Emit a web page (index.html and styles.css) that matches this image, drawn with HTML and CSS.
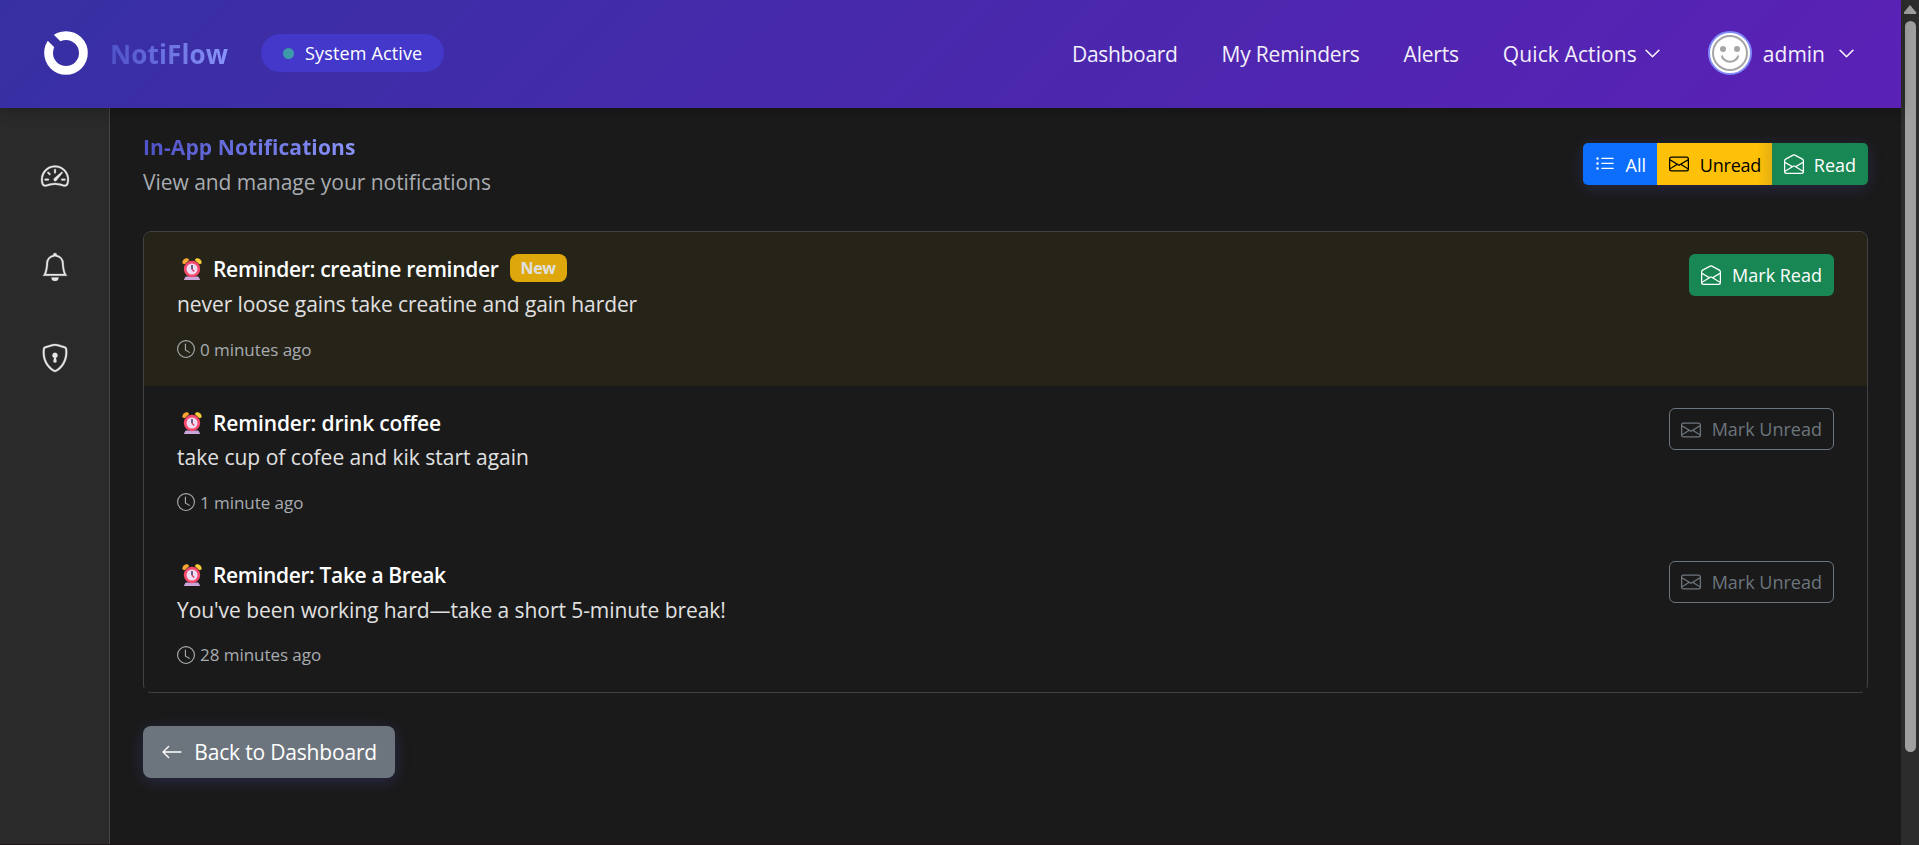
FILE: index.html
```html
<!DOCTYPE html>
<html lang="en">
<head>
<meta charset="utf-8">
<title>NotiFlow</title>
<link rel="stylesheet" href="styles.css">
</head>
<body>
<svg class="defs" width="0" height="0">
  <symbol id="envelope" viewBox="0 0 16 16"><path d="M0 4a2 2 0 0 1 2-2h12a2 2 0 0 1 2 2v8a2 2 0 0 1-2 2H2a2 2 0 0 1-2-2zm2-1a1 1 0 0 0-1 1v.217l7 4.2 7-4.2V4a1 1 0 0 0-1-1zm13 2.383-4.708 2.825L15 11.105zm-.034 6.876-5.64-3.471L8 9.583l-1.326-.795-5.64 3.47A1 1 0 0 0 2 13h12a1 1 0 0 0 .966-.741M1 11.105l4.708-2.897L1 5.383z"/></symbol>
  <symbol id="envelope-open" viewBox="0 0 16 16"><path d="M8.47 1.318a1 1 0 0 0-.94 0l-6 3.2A1 1 0 0 0 1 5.4v.817l5.75 3.45L8 8.917l1.25.75L15 6.217V5.4a1 1 0 0 0-.53-.882zM15 7.383l-4.778 2.867L15 13.117zm-.035 6.88L8 10.082l-6.965 4.18A1 1 0 0 0 2 15h12a1 1 0 0 0 .965-.738ZM1 13.116l4.778-2.867L1 7.383v5.734ZM7.059.435a2 2 0 0 1 1.882 0l6 3.2A2 2 0 0 1 16 5.4V14a2 2 0 0 1-2 2H2a2 2 0 0 1-2-2V5.4a2 2 0 0 1 1.059-1.765z"/></symbol>
  <symbol id="clock" viewBox="0 0 16 16"><path d="M8 3.5a.5.5 0 0 0-1 0V9a.5.5 0 0 0 .252.434l3.5 2a.5.5 0 0 0 .496-.868L8 8.71z"/><path d="M8 16A8 8 0 1 0 8 0a8 8 0 0 0 0 16m7-8A7 7 0 1 1 1 8a7 7 0 0 1 14 0"/></symbol>
  <symbol id="chevron" viewBox="0 0 16 16"><path fill-rule="evenodd" d="M1.646 4.646a.5.5 0 0 1 .708 0L8 10.293l5.646-5.647a.5.5 0 0 1 .708.708l-6 6a.5.5 0 0 1-.708 0l-6-6a.5.5 0 0 1 0-.708"/></symbol>
  <symbol id="alarm" viewBox="0 0 20 22">
    <path d="M.6 5.6C-.4 2.500 2.600-.3 5.600.3l1.700 1.600L2.500 6.300z" fill="#f9a833"/>
    <path d="M19.400 5.600C20.400 2.500 17.400-.3 14.400.3l-1.700 1.600 4.800 4.400z" fill="#fccd3a"/>
    <path d="M3.600 18.500h12.800l1.800 3.500H1.800z" fill="#c9a6dc"/>
    <circle cx="10" cy="11" r="8.200" fill="#f8486c"/>
    <circle cx="10" cy="11" r="5.500" fill="#eedcf2"/>
    <path d="M10 7v4.200" stroke="#45325c" stroke-width="1.500" fill="none"/>
    <path d="M10 11.200l2.200 2.200" stroke="#e0355c" stroke-width="1.400" fill="none"/>
  </symbol>
  <mask id="gap" maskUnits="userSpaceOnUse" x="0" y="0" width="44" height="44"><rect width="44" height="44" fill="#fff"/><path d="M22 22L0 0" stroke="#000" stroke-width="8.600"/></mask>
</svg>

<div class="window">
  <div class="page">
    <header class="topbar">
      <svg class="logo" viewBox="0 0 44 44"><circle class="logo-ring" cx="22" cy="22" r="17.400" mask="url(#gap)"/></svg>
      <span class="brand">NotiFlow</span>
      <span class="status"><i class="dot"></i><span>System Active</span></span>
      <nav class="nav">
        <a class="n1">Dashboard</a>
        <a class="n2">My Reminders</a>
        <a class="n3">Alerts</a>
        <a class="n4">Quick Actions</a>
        <svg class="chev"><use href="#chevron"/></svg>
      </nav>
      <div class="user">
        <svg class="avatar" viewBox="0 0 44 44"><circle cx="22" cy="22" r="21" fill="#fff" stroke="#818cf8" stroke-width="2"/><g fill="none" stroke="#a6a6a6" stroke-width="2"><circle cx="22" cy="22" r="17"/><path d="M13.700 24.500a8.400 7.300 0 0 0 16.600 0"/></g><circle cx="15" cy="18" r="3" fill="#a6a6a6"/><circle cx="29" cy="18" r="3" fill="#a6a6a6"/></svg>
        <span class="uname">admin</span>
        <svg class="chev"><use href="#chevron"/></svg>
      </div>
    </header>

    <div class="body">
      <aside class="side">
        <svg viewBox="0 0 16 16"><path d="M8 4a.5.5 0 0 1 .5.5V6a.5.5 0 0 1-1 0V4.500A.5.5 0 0 1 8 4M3.732 5.732a.5.5 0 0 1 .707 0l.915.914a.5.5 0 1 1-.708.708l-.914-.915a.5.5 0 0 1 0-.707M2 10a.5.5 0 0 1 .5-.5h1.586a.5.5 0 0 1 0 1H2.500A.5.5 0 0 1 2 10m9.500 0a.5.5 0 0 1 .5-.5h1.500a.5.5 0 0 1 0 1H12a.5.5 0 0 1-.5-.5m.754-4.246a.39.39 0 0 0-.527-.02L7.547 9.310a.91.91 0 1 0 1.302 1.258l3.434-4.297a.39.39 0 0 0-.029-.518z"/><path fill-rule="evenodd" d="M0 10a8 8 0 1 1 15.547 2.661c-.442 1.253-1.845 1.602-2.932 1.250C11.309 13.488 9.475 13 8 13c-1.474 0-3.310.488-4.615.911-1.087.352-2.490.003-2.932-1.250A8 8 0 0 1 0 10m8-7a7 7 0 0 0-6.603 9.329c.203.575.923.876 1.680.630C4.397 12.533 6.358 12 8 12s3.604.532 4.923.960c.757.245 1.477-.056 1.680-.631A7 7 0 0 0 8 3"/></svg>
        <svg viewBox="0 0 16 16"><path d="M8 16a2 2 0 0 0 2-2H6a2 2 0 0 0 2 2M8 1.918l-.797.161A4 4 0 0 0 4 6c0 .628-.134 2.197-.459 3.742-.16.767-.376 1.566-.663 2.258h10.244c-.287-.692-.502-1.490-.663-2.258C12.134 8.197 12 6.628 12 6a4 4 0 0 0-3.203-3.920zM14.220 12c.223.447.481.801.780 1H1c.299-.199.557-.553.780-1C2.680 10.200 3 6.880 3 6c0-2.420 1.720-4.440 4.005-4.901a1 1 0 1 1 1.990 0A5 5 0 0 1 13 6c0 .880.320 4.200 1.220 6"/></svg>
        <svg viewBox="0 0 16 16"><path d="M5.338 1.590a61 61 0 0 0-2.837.856.480.480 0 0 0-.328.390c-.554 4.157.726 7.190 2.253 9.188a10.700 10.700 0 0 0 2.287 2.233c.346.244.652.420.893.533q.180.085.293.118a1 1 0 0 0 .101.025 1 1 0 0 0 .1-.025q.114-.034.294-.118c.240-.113.547-.290.893-.533a10.700 10.700 0 0 0 2.287-2.233c1.527-1.997 2.807-5.031 2.253-9.188a.480.480 0 0 0-.328-.390c-.651-.213-1.750-.560-2.837-.855C9.552 1.290 8.531 1.067 8 1.067c-.530 0-1.552.223-2.662.524zM5.072.560C6.157.265 7.310 0 8 0s1.843.265 2.928.560c1.110.300 2.229.655 2.887.870a1.540 1.540 0 0 1 1.044 1.262c.596 4.477-.787 7.795-2.465 9.990a11.800 11.800 0 0 1-2.517 2.453 7 7 0 0 1-1.048.625c-.280.132-.581.240-.829.240s-.548-.108-.829-.240a7 7 0 0 1-1.048-.625 11.800 11.800 0 0 1-2.517-2.453C1.928 10.487.545 7.169 1.141 2.692A1.540 1.540 0 0 1 2.185 1.430 63 63 0 0 1 5.072.560"/><path d="M9.500 6.500a1.500 1.500 0 0 1-1 1.415l.385 1.990a.5.5 0 0 1-.491.595h-.788a.5.5 0 0 1-.490-.595l.384-1.990a1.500 1.500 0 1 1 2-1.415"/></svg>
      </aside>

      <main class="main">
        <section class="head">
          <div class="titles">
            <h1 class="title">In-App Notifications</h1>
            <p class="sub">View and manage your notifications</p>
          </div>
          <div class="filters">
            <a class="fbtn all"><svg viewBox="0 0 16 16"><path fill-rule="evenodd" d="M5 11.500a.5.5 0 0 1 .5-.5h9a.5.5 0 0 1 0 1h-9a.5.5 0 0 1-.5-.5m0-4a.5.5 0 0 1 .5-.5h9a.5.5 0 0 1 0 1h-9a.5.5 0 0 1-.5-.5m0-4a.5.5 0 0 1 .5-.5h9a.5.5 0 0 1 0 1h-9a.5.5 0 0 1-.5-.5m-3 1a1 1 0 1 0 0-2 1 1 0 0 0 0 2m0 4a1 1 0 1 0 0-2 1 1 0 0 0 0 2m0 4a1 1 0 1 0 0-2 1 1 0 0 0 0 2"/></svg><span>All</span></a>
            <a class="fbtn unread"><svg><use href="#envelope"/></svg><span>Unread</span></a>
            <a class="fbtn read"><svg><use href="#envelope-open"/></svg><span>Read</span></a>
          </div>
        </section>

        <section class="list">
          <article class="item fresh">
            <div class="info">
              <h2 class="name"><svg class="alarm"><use href="#alarm"/></svg><span class="t1">Reminder: creatine reminder</span><span class="badge">New</span></h2>
              <p class="msg m1">never loose gains take creatine and gain harder</p>
              <p class="time"><svg><use href="#clock"/></svg><span>0 minutes ago</span></p>
            </div>
            <a class="act mark-read"><svg><use href="#envelope-open"/></svg><span>Mark Read</span></a>
          </article>
          <article class="item">
            <div class="info">
              <h2 class="name"><svg class="alarm"><use href="#alarm"/></svg><span class="t2">Reminder: drink coffee</span></h2>
              <p class="msg">take cup of cofee and kik start again</p>
              <p class="time"><svg><use href="#clock"/></svg><span>1 minute ago</span></p>
            </div>
            <a class="act mark-unread"><svg><use href="#envelope"/></svg><span>Mark Unread</span></a>
          </article>
          <article class="item">
            <div class="info">
              <h2 class="name"><svg class="alarm"><use href="#alarm"/></svg><span class="t3">Reminder: Take a Break</span></h2>
              <p class="msg m3">You've been working hard—take a short 5-minute break!</p>
              <p class="time"><svg><use href="#clock"/></svg><span>28 minutes ago</span></p>
            </div>
            <a class="act mark-unread"><svg><use href="#envelope"/></svg><span>Mark Unread</span></a>
          </article>
        </section>

        <a class="back"><svg viewBox="0 0 16 16"><path fill-rule="evenodd" d="M15 8a.5.5 0 0 0-.5-.5H2.707l3.147-3.146a.5.5 0 1 0-.708-.708l-4 4a.5.5 0 0 0 0 .708l4 4a.5.5 0 0 0 .708-.708L2.707 8.500H14.500A.5.5 0 0 0 15 8"/></svg><span>Back to Dashboard</span></a>
      </main>
    </div>
  </div>
  <div class="scroll"><i class="arrow"></i><i class="thumb"></i></div>
</div>
</body>
</html>
```
FILE: styles.css
```css
* { box-sizing: border-box; margin: 0; padding: 0; }
body {
  width: 1919px; height: 845px; overflow: hidden;
  background: #1a1a1a; color: #e0e0e0;
  font: 400 21px/35px "Open Sans", "Noto Sans", sans-serif;
}
svg { fill: currentColor; flex: none; display: block; }
span, a, p, h1, h2 { white-space: nowrap; }
.defs { position: absolute; }
.window { display: flex; height: 845px; }
.page { width: 1901px; display: flex; flex-direction: column; border-bottom: 1px solid #1d1418; }

.topbar {
  height: 108px; flex: none; display: flex; align-items: center;
  padding: 0 46px 0 44px; position: relative; z-index: 2;
  background: linear-gradient(135deg, #3730a3, #5b21b6);
  box-shadow: 0 4px 12px rgba(0, 0, 0, .22);
}
.logo { width: 44px; height: 44px; margin-bottom: 2px; }
.logo-ring { fill: none; stroke: #fff; stroke-width: 8.800; }
.brand, .title {
  background: linear-gradient(90deg, #4f52c8, #8a94fa);
  -webkit-background-clip: text; background-clip: text; color: transparent;
}
.brand { margin-left: 22px; width: 118px; font-size: 26px; font-weight: 700; letter-spacing: .15px; }
.status {
  margin: -2px 0 0 33px; width: 183px; height: 38px; border-radius: 19px;
  background: #4338ca; color: #fff; font-size: 18px; letter-spacing: .15px;
  display: flex; align-items: center; padding-left: 22px; gap: 11px;
}
.dot { width: 11px; height: 11px; border-radius: 50%; background: #3e9aa9; }
.nav { margin-left: auto; display: flex; align-items: center; color: #f3effb; }
.nav a + a { margin-left: 44px; }
.n1 { letter-spacing: -.33px; }
.n2 { letter-spacing: -.2px; }
.n3 { letter-spacing: -.2px; }
.n4 { letter-spacing: .1px; }
.chev { width: 17px; height: 17px; color: #fff; stroke: currentColor; stroke-width: .5; margin-bottom: 1px; }
.nav .chev { margin-left: 7px; }
.user { display: flex; align-items: center; margin-left: 47px; color: #f3effb; }
.avatar { width: 44px; height: 44px; margin-bottom: 2px; }
.uname { margin: 0 13px 0 11px; }

.body { flex: 1; display: flex; }
.side {
  width: 110px; background: #2a2a2a; border-right: 1px solid #444;
  display: flex; flex-direction: column; align-items: center; gap: 63px; padding-top: 54px;
}
.side svg { width: 28px; height: 28px; color: #e6e6e6; stroke: currentColor; stroke-width: .15; overflow: visible; }
.main { flex: 1; padding: 22px 33px 0; }

.head { display: flex; justify-content: space-between; height: 101px; }
.title { font-size: 21px; font-weight: 700; line-height: 35px; width: 213px; letter-spacing: .1px; }
.sub { color: #a8acb0; letter-spacing: -.04px; }
.filters { display: flex; height: 42px; margin-top: 13px; border-radius: 5px; box-shadow: 0 3px 16px rgba(99, 102, 241, .2); font-size: 18px; }
.fbtn { display: flex; align-items: center; justify-content: space-between; padding: 3px 12px 0; }
.fbtn svg { width: 20px; height: 20px; margin-bottom: 3px; }
.all { width: 74px; background: #0d6efd; color: #fff; border-radius: 5px 0 0 5px; padding-right: 11px; }
.unread { width: 115px; background: linear-gradient(90deg, #ffc107 100px, #e5b012); color: #000; letter-spacing: -.25px; padding-right: 11px; }
.read { width: 96px; background: #198754; color: #fff; border-radius: 0 5px 5px 0; }

.list { position: relative; height: 462px; border: 1px solid #414141; border-radius: 8px; }
/* the last row's square corners cover the rounded border */
.list::before, .list::after { content: ""; position: absolute; bottom: -1px; width: 5px; height: 5px; background: #1a1a1a; }
.list::before { left: -1px; }
.list::after { right: -1px; }
.item { display: flex; justify-content: space-between; height: 152.6px; padding: 20px 33px 0; }
.fresh { background: #262319; height: 154px; border-radius: 7px 7px 0 0; }
.name { display: flex; align-items: center; height: 34px; color: #fff; font-size: 21px; font-weight: 600; }
.fresh .name { height: 35px; }
.t1 { letter-spacing: -.3px; }
.t2 { letter-spacing: -.17px; }
.t3 { letter-spacing: -.36px; }
.alarm { width: 20px; height: 22px; margin: 0 11px 1px 5px; }
.badge { width: 57px; height: 28px; margin: -3px 0 0 11px; border-radius: 8px; background: #dea80c; color: #e0e0e0; font-size: 16px; font-weight: 700; line-height: 29px; letter-spacing: -.4px; text-align: center; }
.msg { height: 35px; }
.m1 { letter-spacing: -.08px; }
.m3 { letter-spacing: -.06px; }
.time { display: flex; align-items: center; gap: 5px; height: 28px; margin-top: 13px; color: #a8acb0; font-size: 17px; letter-spacing: -.05px; }
.time svg { width: 18px; height: 18px; }
.act { display: flex; align-items: center; justify-content: space-between; height: 42px; border-radius: 6px; padding: 0 12px; font-size: 18px; margin-top: 2px; }
.act svg { width: 20px; height: 20px; }
.mark-read { width: 145px; background: #198754; color: #fff; }
.mark-unread { width: 165px; border: 1px solid #6c757d; color: #6c757d; padding: 1px 11px 0; }

.back {
  display: flex; align-items: center; justify-content: space-between;
  width: 252px; height: 52px; margin-top: 33px; padding: 0 18px;
  border-radius: 8px; background: #6c757d; color: #fff; letter-spacing: -.18px;
  box-shadow: 0 3px 16px rgba(99, 102, 241, .22);
}
.back svg { width: 22px; height: 22px; }

.scroll { width: 18px; background: #2c2c2c; display: flex; flex-direction: column; align-items: center; padding-top: 5px; }
.arrow { width: 13px; height: 9px; background: #9f9f9f; clip-path: polygon(50% 0, 100% 85%, 95% 100%, 5% 100%, 0 85%); }
.thumb { width: 11px; height: 731px; margin: 7px 0 0 1px; border-radius: 6px; background: #9f9f9f; }
```
